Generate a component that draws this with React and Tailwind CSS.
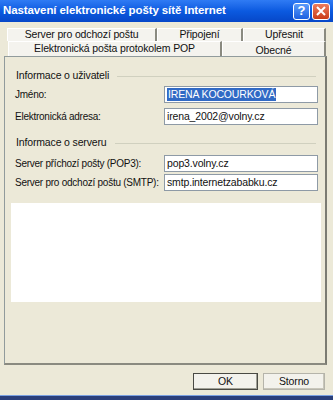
import React from "react";

const Field = ({ label, value, selected }) => (
	<div className="flex items-center h-[17px]">
		<span className="w-[149px] shrink-0 whitespace-nowrap text-[10px] tracking-[-0.25px]">{label}</span>
		<div className="flex-1 h-[17px] bg-white border border-[#8e9aa6] flex items-center pl-[2px] mr-[5px] whitespace-nowrap overflow-hidden">
			{selected ? (
				<span className="bg-[#316ac5] text-white leading-[13px] px-[1px]">{value}</span>
			) : (
				<span>{value}</span>
			)}
		</div>
	</div>
);

const GroupTitle = ({ children }) => (
	<div className="flex items-center h-[12px] mr-[7px]">
		<span className="pr-[8px] whitespace-nowrap">{children}</span>
		<div className="flex-1 h-px bg-[#d0d0bf]"></div>
	</div>
);

const Tab = ({ children, className }) => (
	<div
		className={
			"flex items-center justify-center whitespace-nowrap bg-[#f4f3ee] border-t border-l border-white border-r-2 border-r-[#8a8a80] " +
			className
		}
	>
		{children}
	</div>
);

export default function App() {
	return (
		<div
			className="w-[333px] h-[400px] bg-[#ece9d8] flex flex-col text-[10.5px] tracking-[-0.15px] text-[#111] overflow-hidden"
			style={{ fontFamily: '"Liberation Sans", Arial, sans-serif' }}
		>
			{/* title bar */}
			<div className="h-[22px] shrink-0 flex items-center bg-gradient-to-b from-[#2f7bf4] via-[#0b5ae0] to-[#0747c8] pl-[3px] pr-[3px]">
				<span className="flex-1 text-white font-bold text-[11.5px] tracking-[-0.1px] whitespace-nowrap">
					Nastavení elektronické pošty sítě Internet
				</span>
				<div className="w-[17px] h-[17px] rounded-[3px] border border-white bg-gradient-to-b from-[#5a9bfa] to-[#1d5fe0] flex items-center justify-center text-white font-bold text-[13px] mr-[2px]">
					?
				</div>
				<div className="w-[18px] h-[17px] rounded-[3px] border border-white bg-gradient-to-b from-[#ec7c5c] to-[#c93a14] flex items-center justify-center">
					<svg width="10" height="10" viewBox="0 0 10 10">
						<path d="M1 1 L9 9 M9 1 L1 9" stroke="white" strokeWidth="2" />
					</svg>
				</div>
			</div>

			{/* tabs */}
			<div className="mt-[6px] pl-[7px] pr-[7px] flex flex-col">
				<div className="flex h-[13px]">
					<Tab className="w-[150px]">Server pro odchozí poštu</Tab>
					<Tab className="w-[86px]">Připojení</Tab>
					<Tab className="w-[83px]">Upřesnit</Tab>
				</div>
				<div className="flex h-[15px] pl-[1px]">
					<Tab className="w-[214px] pb-[1px]">Elektronická pošta protokolem POP</Tab>
					<Tab className="w-[104px] pt-[3px]">Obecné</Tab>
				</div>
			</div>

			{/* panel */}
			<div className="mx-[4px] w-[323px] h-[309px] border border-[#919b9c] border-r-2 border-r-[#7b7b72] border-b-2 border-b-[#8a8a80] flex flex-col pl-[11px] pr-[2px]">
				<div className="mt-[13px]">
					<GroupTitle>Informace o uživateli</GroupTitle>
				</div>
				<div className="mt-[4px] flex flex-col gap-[5px] -ml-[1px]">
					<Field label="Jméno:" value="IRENA KOCOURKOVÁ" selected />
					<Field label="Elektronická adresa:" value="irena_2002@volny.cz" />
				</div>
				<div className="mt-[12px]">
					<GroupTitle>Informace o serveru</GroupTitle>
				</div>
				<div className="mt-[6px] flex flex-col gap-[2px] -ml-[1px]">
					<Field label="Server příchozí pošty (POP3):" value="pop3.volny.cz" />
					<Field label="Server pro odchozí poštu (SMTP):" value="smtp.internetzababku.cz" />
				</div>
				<div className="mt-[12px] -ml-[5px] mr-[2px] h-[99px] bg-white"></div>
			</div>

			{/* buttons */}
			<div className="flex justify-end gap-[5px] pr-[8px] mt-[8px]">
				<div className="w-[65px] h-[17px] flex items-center justify-center bg-[#f3f2ec] border border-[#4a4a44] shadow-[inset_-1px_-1px_0_#a0a096]">
					OK
				</div>
				<div className="w-[62px] h-[17px] flex items-center justify-center bg-[#f3f2ec] border border-[#b5b4aa] shadow-[inset_-1px_-1px_0_#c8c6ba]">
					Storno
				</div>
			</div>

			<div className="mt-auto h-[5px] border-t border-[#7aa0e0] bg-[#2a3f7a]"></div>
		</div>
	);
}
